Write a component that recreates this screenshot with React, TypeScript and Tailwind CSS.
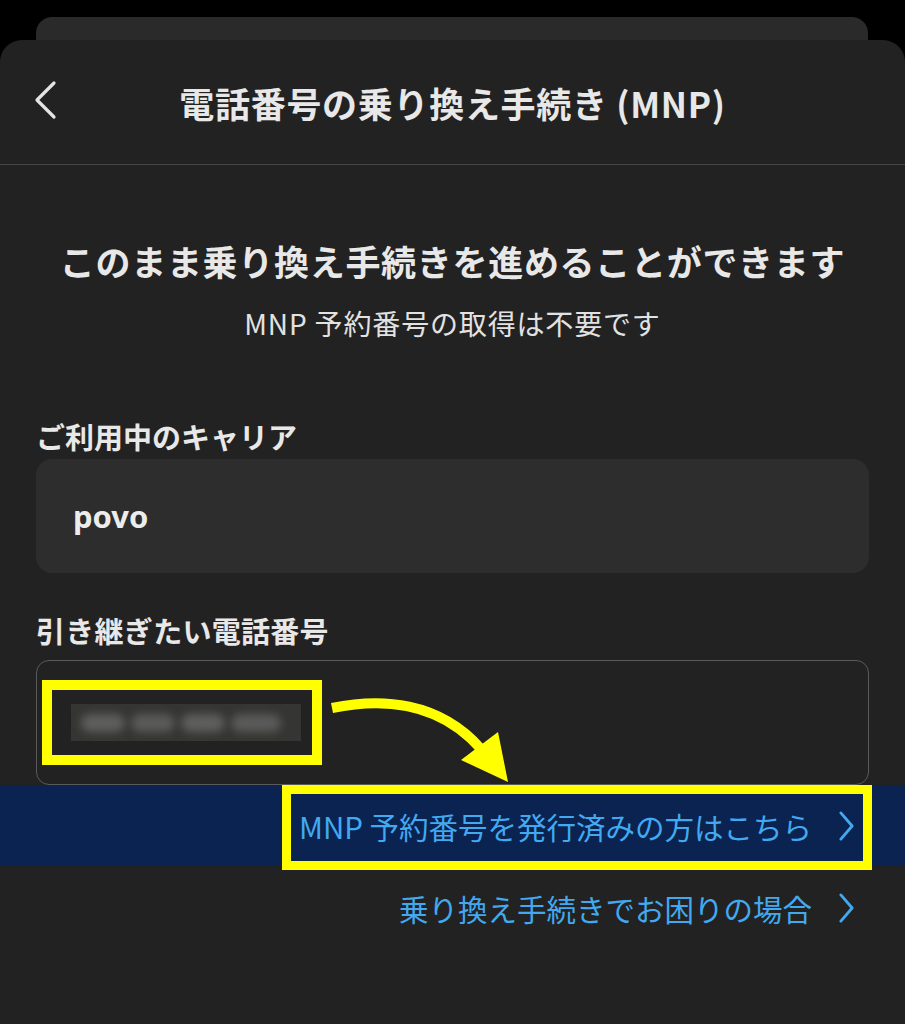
import React from "react";

const FONT = { fontFamily: '"Noto Sans CJK JP", "Noto Sans", sans-serif' };

function Chevron({ className }: { className?: string }) {
  return (
    <svg viewBox="0 0 16 32" className={className} fill="none" stroke="currentColor" strokeWidth={3} strokeLinecap="round" strokeLinejoin="round">
      <path d="M2 2 L14 16 L2 30" />
    </svg>
  );
}

export default function App() {
  return (
    <div className="min-h-[1024px] w-[905px] bg-black pt-[17px] overflow-hidden" style={FONT}>
      <div className="mx-[36px] h-[23px] w-[832px] rounded-t-[16px] bg-[#2a2a2a]" />
      <div className="min-h-[984px] rounded-t-[22px] bg-[#222222]">
        {/* header */}
        <div className="relative flex h-[125px] items-center justify-center border-b border-[#464646]">
          <svg viewBox="0 0 24 40" className="absolute left-[33px] top-[40px] h-[40px] w-[24px] text-[#e4e4e4]" fill="none" stroke="currentColor" strokeWidth={3.2} strokeLinecap="round" strokeLinejoin="round">
            <path d="M21 3 L4 20 L21 37" />
          </svg>
          <h1 className="text-[35px] font-bold leading-none tracking-[0.02em] text-[#e8e8e8]">電話番号の乗り換え手続き (MNP)</h1>
        </div>

        <div className="pt-[72px] text-center">
          <p className="text-[35px] font-bold leading-[48px] tracking-[0.02em] text-[#e8e8e8]">このまま乗り換え手続きを進めることができます</p>
          <p className="mt-[20px] text-[28px] leading-[36px] tracking-[0.03em] text-[#e2e2e2]">MNP 予約番号の取得は不要です</p>
        </div>

        <div className="px-[36px]">
          <p className="mt-[75px] text-[29px] font-bold leading-[40px] text-[#e8e8e8]">ご利用中のキャリア</p>
          <div className="mt-[3px] flex h-[114px] items-center rounded-[16px] bg-[#2d2d2d] px-[37px]">
            <span className="text-[31px] font-bold text-[#ececec]" style={{ fontFamily: '"Noto Sans", "Noto Sans CJK JP", sans-serif' }}>povo</span>
          </div>

          <p className="mt-[37px] text-[29px] font-bold leading-[40px] tracking-[0.01em] text-[#e8e8e8]">引き継ぎたい電話番号</p>
          <div className="relative mt-[10px] h-[125px] rounded-[13px] border border-[#5a5a5a] bg-[#222222]">
            {/* yellow annotation box */}
            <div className="absolute left-[5px] top-[19px] flex h-[85px] w-[280px] items-center border-[10px] border-[#ffff00] pl-[19px]">
              <div className="flex h-[37px] w-[230px] items-center gap-[6px] overflow-hidden bg-[#353533] px-[10px]">
                <div className="h-[18px] w-[44px] rounded-full bg-[#5e5e5e] blur-[4px]" />
                <div className="h-[18px] w-[44px] rounded-full bg-[#5a5a5a] blur-[4px]" />
                <div className="h-[18px] w-[44px] rounded-full bg-[#5e5e5e] blur-[4px]" />
                <div className="h-[18px] w-[50px] rounded-full bg-[#5a5a5a] blur-[4px]" />
              </div>
            </div>
            {/* arrow */}
            <svg viewBox="0 0 200 100" className="absolute left-[284px] top-[28px] h-[100px] w-[200px] overflow-visible">
              <path d="M11 19 C 60 9, 118 12, 160 60" fill="none" stroke="#ffff00" strokeWidth={10} />
              <polygon points="140,71 177,43 187,93" fill="#ffff00" />
            </svg>
          </div>
        </div>

        {/* highlighted band */}
        <div className="relative flex h-[81px] items-center justify-end bg-[#0b2350] pr-[51px]">
          <span className="text-[29.5px] leading-[40px] text-[#42a9f0]">MNP 予約番号を発行済みの方はこちら</span>
          <Chevron className="ml-[27px] h-[30px] w-[15px] text-[#42a9f0]" />
          <div className="absolute left-[282px] top-0 h-[85px] w-[590px] border-[9px] border-[#ffff00]" />
        </div>

        <div className="mt-[22px] flex items-center justify-end pr-[51px]">
          <span className="text-[29.5px] leading-[40px] text-[#42a9f0]">乗り換え手続きでお困りの場合</span>
          <Chevron className="ml-[27px] h-[30px] w-[15px] text-[#42a9f0]" />
        </div>
      </div>
    </div>
  );
}
